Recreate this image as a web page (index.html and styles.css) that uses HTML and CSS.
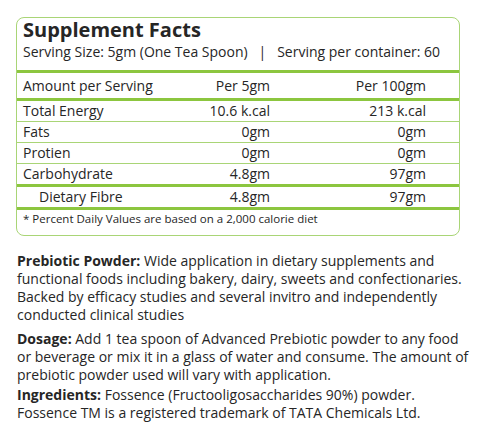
FILE: index.html
```html
<!DOCTYPE html>
<html lang="en">
<head>
    <meta charset="UTF-8">
    <meta name="viewport" content="width=device-width, initial-scale=1.0">
    <title>Supplement Facts</title>
    <link rel="stylesheet" href="styles.css">
</head>
<body>
    <div class="facts">
        <h1>Supplement Facts</h1>
        <p class="serving">Serving Size: 5gm (One Tea Spoon) &nbsp; | &nbsp; Serving per container: 60</p>
        <table class="facts-table">
            <colgroup>
                <col class="col-name">
                <col class="col-small">
                <col class="col-big">
            </colgroup>
            <tr class="head-row">
                <td>Amount per Serving</td>
                <td class="num">Per 5gm</td>
                <td class="num">Per 100gm</td>
            </tr>
            <tr>
                <td>Total Energy</td>
                <td class="num">10.6 k.cal</td>
                <td class="num">213 k.cal</td>
            </tr>
            <tr>
                <td>Fats</td>
                <td class="num">0gm</td>
                <td class="num">0gm</td>
            </tr>
            <tr>
                <td>Protien</td>
                <td class="num">0gm</td>
                <td class="num">0gm</td>
            </tr>
            <tr class="thick">
                <td>Carbohydrate</td>
                <td class="num">4.8gm</td>
                <td class="num">97gm</td>
            </tr>
            <tr class="thick">
                <td class="sub">Dietary Fibre</td>
                <td class="num">4.8gm</td>
                <td class="num">97gm</td>
            </tr>
        </table>
        <p class="note">* Percent Daily Values are based on a 2,000 calorie diet</p>
    </div>

    <div class="info">
        <p><b>Prebiotic Powder:</b> Wide application in dietary supplements and<br>
        functional foods including bakery, dairy, sweets and confectionaries.<br>
        Backed by efficacy studies and several invitro and independently<br>
        conducted clinical studies</p>
        <p class="dosage"><b>Dosage:</b> Add 1 tea spoon of Advanced Prebiotic powder to any food<br>
        or beverage or mix it in a glass of water and consume. The amount of<br>
        prebiotic powder used will vary with application.</p>
        <p class="ingredients"><b>Ingredients:</b> Fossence (Fructooligosaccharides 90%) powder.<br>
        Fossence TM is a registered trademark of TATA Chemicals Ltd.</p>
    </div>
</body>
</html>
```
FILE: styles.css
```css
body {
    margin: 0;
    font-family: "Open Sans", "DejaVu Sans", sans-serif;
    color: #262626;
    background-color: #ffffff;
}

.facts {
    margin: 17px 0 0 16px;
    width: 444px;
    border: 1px solid #a9d576;
    border-radius: 8px;
    box-sizing: border-box;
    padding-bottom: 7px;
}

.facts h1 {
    margin: 0;
    padding: 0 6px;
    font-size: 20px;
    line-height: 24px;
    font-weight: bold;
}

.serving {
    margin: 0;
    padding: 0 6px 8px;
    font-size: 14px;
    line-height: 20px;
}

.facts-table {
    width: 100%;
    border-collapse: collapse;
    table-layout: fixed;
    font-size: 14px;
    border-top: 3px solid #8cc63f;
}

.col-name { width: 173px; }
.col-small { width: 80px; }
.col-big { width: 189px; }

.facts-table td {
    padding: 0;
    line-height: 20px;
    white-space: nowrap;
}

.facts-table td:first-child {
    padding-left: 6px;
}

.facts-table td:last-child {
    padding-right: 33px;
}

.facts-table tr {
    border-bottom: 1px solid #a9d576;
}

.facts-table .head-row {
    border-bottom: 3px solid #8cc63f;
}

.facts-table .head-row td {
    padding-top: 3px;
    padding-bottom: 2px;
}

.facts-table .thick {
    border-bottom: 3px solid #8cc63f;
}

.facts-table .num {
    text-align: right;
}

.facts-table td.sub {
    padding-left: 22px;
}

.note {
    margin: 0;
    padding: 0 6px;
    font-size: 11.5px;
    line-height: 18px;
}

.info {
    margin: 16px 0 0 17px;
    font-size: 14px;
    line-height: 18px;
    white-space: nowrap;
}

.info p {
    margin: 0;
}

.info .dosage {
    margin-top: 6px;
}

.info .ingredients {
    margin-top: 2px;
}
```
